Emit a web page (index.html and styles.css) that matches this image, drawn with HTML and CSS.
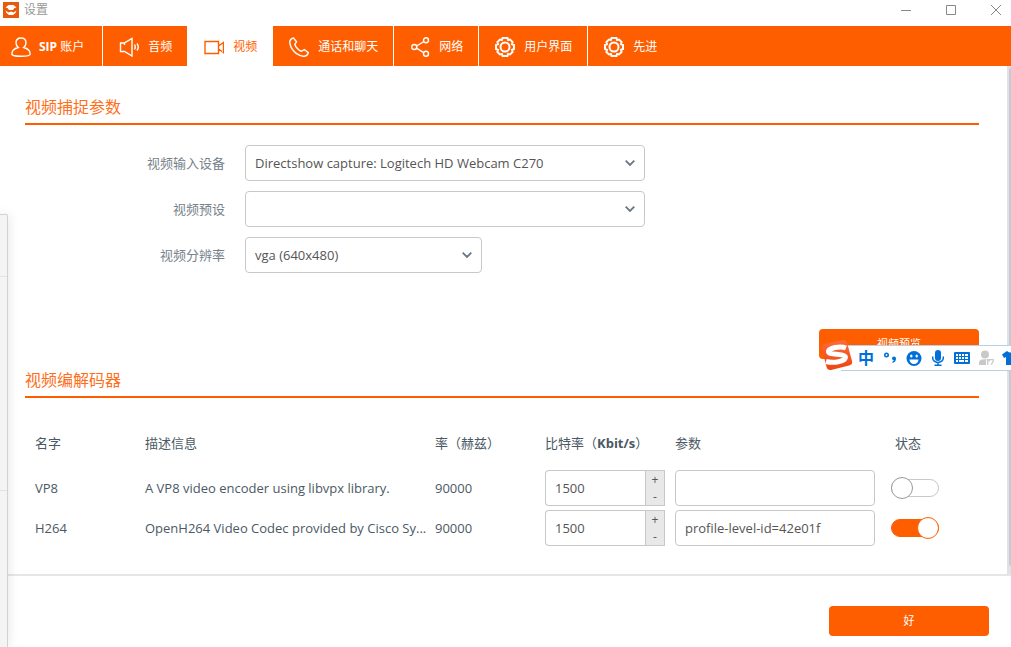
FILE: index.html
```html
<!DOCTYPE html>
<html lang="zh-CN">
<head>
<meta charset="utf-8">
<meta name="viewport" content="width=device-width, initial-scale=1">
<title>设置</title>
<link rel="stylesheet" href="styles.css">
</head>
<body>
<div class="window">
  <header class="titlebar">
    <svg class="app-icon" viewBox="0 0 16 16" aria-hidden="true">
      <rect width="16" height="16" fill="#e8590c"/>
      <path d="M5.500 3H10.500L13.500 5.500L11.500 6L10 8H6L4.500 6L2.500 5.500Z" fill="#fff"/>
      <path d="M2.500 8.500L5.500 10.500L8 9.500L10.500 10.500L13.500 8.500L12.500 11L10 13H6L3.500 11Z" fill="#fff"/>
    </svg>
    <span class="title">设置</span>
    <div class="window-controls">
      <button class="window-button" type="button" aria-label="最小化"><svg viewBox="0 0 10 10"><path d="M0 5.500H10"/></svg></button>
      <button class="window-button" type="button" aria-label="最大化"><svg viewBox="0 0 10 10"><path d="M.5 .5H9.500V9.500H.5Z"/></svg></button>
      <button class="window-button" type="button" aria-label="关闭"><svg viewBox="0 0 10 10"><path d="M0 0L10 10M10 0L0 10"/></svg></button>
    </div>
  </header>

  <nav class="tabs">
    <button class="tab tab-first" type="button">
      <svg class="icon" viewBox="0 0 20 20"><path d="M7.300 10.500C5.500 9 5 7.500 5 5.800C5 3 7 1 10 1S15 3 15 5.800C15 7.500 14.500 9 12.700 10.500C16 11.300 19.200 13.500 19.200 17C19.200 18.600 15 19.200 10 19.200S.8 18.600 .8 17C.8 13.500 4 11.300 7.300 10.500Z"/></svg>
      <span><b>SIP</b> 账户</span>
    </button>
    <button class="tab" type="button">
      <svg class="icon" viewBox="0 0 20 20"><path d="M5.500 6H1.500V14.500H5.500L13 19V1.500L5.500 6V8M15.500 7.500Q17 10 15.500 12.500M18 6.500Q20.500 10 18 13.500"/></svg>
      <span>音频</span>
    </button>
    <button class="tab tab-active" type="button" aria-current="page">
      <svg class="icon" viewBox="0 0 20 20"><path d="M1 4.500H14.500V16.500H1ZM14.500 9L19.500 5.500V15.500L14.500 12"/></svg>
      <span>视频</span>
    </button>
    <button class="tab" type="button">
      <svg class="icon" viewBox="0 0 20 20"><path d="M4.500 1L7.500 4.800L5.800 7.300C6.500 10 9.800 13.500 12.500 14.300L15.300 12.500L19.300 15.700C18.500 18.500 16.500 19.500 14 19.200C7.500 18.500 1.300 12 .8 5.800C.7 3.200 2 1.500 4.500 1Z"/></svg>
      <span>通话和聊天</span>
    </button>
    <button class="tab" type="button">
      <svg class="icon" viewBox="0 0 20 20"><path d="M6.500 9L14 4.500M6.500 11.200L14 15.800"/><circle cx="4.300" cy="10" r="2.500"/><circle cx="16" cy="3.300" r="2.500"/><circle cx="16" cy="16.800" r="2.500"/></svg>
      <span>网络</span>
    </button>
    <button class="tab" type="button">
      <svg class="icon icon-gear" viewBox="0 0 20 20"><path d="M7.600 1H12.400L13.100 3L15 2.600L17.600 5L17 7.100L19 8V12L17 12.900L17.600 15L15 17.400L13.100 17L12.400 19H7.600L6.900 17L5 17.400L2.400 15L3 12.900L1 12V8L3 7.100L2.400 5L5 2.600L6.900 3Z"/><circle cx="10" cy="10" r="4.500"/></svg>
      <span>用户界面</span>
    </button>
    <button class="tab" type="button">
      <svg class="icon icon-gear" viewBox="0 0 20 20"><path d="M7.600 1H12.400L13.100 3L15 2.600L17.600 5L17 7.100L19 8V12L17 12.900L17.600 15L15 17.400L13.100 17L12.400 19H7.600L6.900 17L5 17.400L2.400 15L3 12.900L1 12V8L3 7.100L2.400 5L5 2.600L6.900 3Z"/><circle cx="10" cy="10" r="4.500"/></svg>
      <span>先进</span>
    </button>
  </nav>

  <div class="body">
    <main class="content">
      <section>
        <h2 class="heading">视频捕捉参数</h2>
        <div class="form">
          <label class="label" for="device">视频输入设备</label>
          <select class="field select" id="device"><option>Directshow capture: Logitech HD Webcam C270</option></select>
          <label class="label" for="preset">视频预设</label>
          <select class="field select" id="preset"><option></option></select>
          <label class="label" for="size">视频分辨率</label>
          <select class="field select select-short" id="size"><option>vga (640x480)</option></select>
        </div>
        <div class="preview"><button class="button" type="button">视频预览</button></div>
      </section>

      <section>
        <h2 class="heading">视频编解码器</h2>
        <table class="codecs">
          <colgroup><col class="col-name"><col class="col-desc"><col class="col-rate"><col class="col-bitrate"><col class="col-params"><col></colgroup>
          <thead>
            <tr><th>名字</th><th>描述信息</th><th>率（赫兹）</th><th id="bitrate">比特率（<b>Kbit/s</b>）</th><th id="params">参数</th><th id="status">状态</th></tr>
          </thead>
          <tbody>
            <tr>
              <td id="vp8">VP8</td>
              <td>A VP8 video encoder using libvpx library.</td>
              <td>90000</td>
              <td><div class="spinner"><input class="field spinner-input" type="text" value="1500" aria-labelledby="vp8 bitrate"><div class="steps"><button class="step" type="button">+</button><button class="step" type="button">-</button></div></div></td>
              <td><input class="field params" type="text" aria-labelledby="vp8 params"></td>
              <td><input class="switch" type="checkbox" role="switch" aria-labelledby="vp8 status"></td>
            </tr>
            <tr>
              <td id="h264">H264</td>
              <td>OpenH264 Video Codec provided by Cisco Sy...</td>
              <td>90000</td>
              <td><div class="spinner"><input class="field spinner-input" type="text" value="1500" aria-labelledby="h264 bitrate"><div class="steps"><button class="step" type="button">+</button><button class="step" type="button">-</button></div></div></td>
              <td><input class="field params" type="text" value="profile-level-id=42e01f" aria-labelledby="h264 params"></td>
              <td><input class="switch" type="checkbox" role="switch" checked aria-labelledby="h264 status"></td>
            </tr>
          </tbody>
        </table>
      </section>
    </main>
    <div class="scrollbar"><div class="thumb"></div></div>
  </div>

  <footer class="footer"><button class="button" type="button">好</button></footer>

  <div class="side-panel"><div class="side-cell side-top"></div><div class="side-cell side-middle"></div></div>

  <div class="ime">
    <svg class="ime-logo" viewBox="0 0 34 32" aria-hidden="true">
      <defs><linearGradient id="logo-fill" x1="0" y1="0" x2="0" y2="1"><stop offset="0" stop-color="#ff6a3c"/><stop offset="1" stop-color="#ec4510"/></linearGradient></defs>
      <path d="M5 5L23 1Q26 .5 27 3.500L32 22Q33 25.500 29 26.500L11 31Q7.500 31.500 6.500 28L2 10Q1 6 5 5Z" fill="url(#logo-fill)"/>
      <path d="M26 9C20 6.500 8 9 8.500 13C9 16.500 25 14 25.500 18.300C25.800 22.500 13 24.500 6 22.500" fill="none" stroke="#fff" stroke-width="5"/>
    </svg>
    <span class="ime-item ime-mode">中</span>
    <svg class="ime-item" viewBox="0 0 16 16"><circle cx="4.500" cy="5" r="1.700" fill="none" stroke="#0070d8" stroke-width="1.600"/><path d="M10 8.500a2 2 0 1 1 4 0q0 3.500-3.500 4.500v-1.500q1.300-.5 1.300-1.300q-1.800 0-1.800-1.700z"/></svg>
    <svg class="ime-item" viewBox="0 0 16 16"><circle cx="8" cy="8.500" r="7.500"/><path d="M3.500 9.500h9a4.500 4.500 0 0 1-9 0z" fill="#fff"/><ellipse cx="5.300" cy="6" rx="1.200" ry="1.600" fill="#fff"/><ellipse cx="10.700" cy="6" rx="1.200" ry="1.600" fill="#fff"/></svg>
    <svg class="ime-item" viewBox="0 0 16 16"><rect x="5" y="0" width="6" height="11" rx="3"/><path d="M2.700 6.500v1.500a5.300 4.500 0 0 0 10.600 0V6.500M8 12.500V15.500M4.500 15.300h7" fill="none" stroke="#0070d8" stroke-width="1.500"/></svg>
    <svg class="ime-item" viewBox="0 0 16 16"><path d="M1 2H15Q16 2 16 3V13Q16 14 15 14H1Q0 14 0 13V3Q0 2 1 2Z"/><path d="M2 4h2v2H2zM5 4h2v2H5zM8 4h2v2H8zM11 4h3v2h-3zM2 7h2v2H2zM5 7h2v2H5zM8 7h2v2H8zM11 7h3v2h-3zM2 10h2v2H2zM5 10h5v2H5zM11 10h3v2h-3z" fill="#fff"/></svg>
    <svg class="ime-item" viewBox="0 0 16 16"><g fill="#c9c9c9"><circle cx="7" cy="4.500" r="4"/><path d="M1 15v-2.500q0-2.500 3-3l6-.5v6z"/></g><path d="M8 8h8v4l-3 4H8z" fill="#fff"/><path d="M8.500 9.700h1.200v5M11.200 11.500V9.600h4v1.800l-2 3.300" fill="none" stroke="#c9c9c9" stroke-width="1.300"/></svg>
    <svg class="ime-item" viewBox="0 0 16 16"><path d="M5 1L0 4.500L2 8L4 7V15H13V7L15 8L16 4.500L12 1Q8.500 4 5 1Z"/></svg>
  </div>
</div>
</body>
</html>
```
FILE: styles.css
```css
* {
  box-sizing: border-box;
}

body {
  margin: 0;
  background: #fff;
  color: #4b5964;
  font: 13px/20px "Open Sans", "Noto Sans CJK SC", sans-serif;
}

button,
input,
select {
  margin: 0;
  font: inherit;
  color: inherit;
}

.window {
  position: relative;
  display: flex;
  flex-direction: column;
  min-height: 100vh;
  overflow: hidden;
}

/* Title bar */
.titlebar {
  display: flex;
  align-items: center;
  height: 26px;
  padding: 0 10px 6px 3px;
}

.app-icon {
  width: 16px;
  height: 16px;
}

.title {
  margin-left: 5px;
  color: #999;
  font-size: 12px;
}

.window-controls {
  display: flex;
  gap: 35px;
  margin-left: auto;
}

.window-button {
  display: flex;
  padding: 0;
  border: 0;
  background: none;
}

.window-button svg {
  width: 10px;
  height: 10px;
  overflow: visible;
  fill: none;
  stroke: #888;
}

/* Tabs */
.tabs {
  display: flex;
  gap: 1px;
  height: 40px;
}

.tab {
  display: flex;
  align-items: center;
  gap: 9px;
  padding: 1px 15px 0 16px;
  border: 0;
  background: #ff5e00;
  color: #fff;
  font-size: 12px;
  white-space: nowrap;
}

.tab-first {
  gap: 8px;
  padding: 1px 18px 0 11px;
}

.tab:last-child {
  flex: 1;
}

.tab-active {
  background: #fff;
  color: #ff5e00;
}

.icon {
  width: 20px;
  height: 20px;
  fill: none;
  stroke: currentColor;
  stroke-width: 1.4;
}

.icon-gear {
  stroke-width: 2;
}

/* Page */
.body {
  display: flex;
  flex: 1;
  border-bottom: 2px solid #e6e6e6;
}

.content {
  flex: 1;
  min-width: 0;
  padding: 29px 28px 26px 25px;
}

.scrollbar {
  width: 4px;
  padding: 2px 0 8px 2px;
  background: #dfe2e6;
}

.thumb {
  height: 100%;
  border-radius: 2px 0 0 2px;
  background: #c5cad3;
}

.heading {
  margin: 0 0 20px;
  padding-bottom: 4px;
  border-bottom: 2px solid #ff5e00;
  color: #ff6f1a;
  font-size: 16px;
  font-weight: 400;
  line-height: 24px;
}

.form {
  display: grid;
  grid-template-columns: 200px minmax(0, 400px);
  gap: 10px 20px;
  align-items: center;
}

.label {
  color: #76818a;
  text-align: right;
}

.field {
  width: 100%;
  height: 36px;
  padding: 0 9px;
  border: 1px solid #c8c8c8;
  border-radius: 4px;
  background: #fff;
  color: #555;
}

.select {
  appearance: none;
  background: #fff url("data:image/svg+xml,%3Csvg xmlns='http://www.w3.org/2000/svg' width='10' height='6'%3E%3Cpath d='M.7 .7L5 5L9.300 .7' fill='none' stroke='%23697785' stroke-width='1.800'/%3E%3C/svg%3E") no-repeat right 9px center;
}

.select-short {
  width: 237px;
}

.button {
  width: 160px;
  height: 30px;
  padding: 0;
  border: 0;
  border-radius: 4px;
  background: #ff5e00;
  color: #fff;
  font-size: 11px;
}

.preview {
  display: flex;
  justify-content: flex-end;
  padding: 56px 0 9px;
}

/* Codec table */
.codecs {
  width: 100%;
  table-layout: fixed;
  border-collapse: collapse;
}

.col-name,
.col-rate {
  width: 110px;
}

.col-desc {
  width: 290px;
}

.col-bitrate {
  width: 130px;
}

.col-params {
  width: 210px;
}

.codecs th {
  height: 50px;
  padding: 0 0 0 10px;
  font-weight: 400;
  text-align: left;
  white-space: nowrap;
}

.codecs td {
  height: 40px;
  padding: 0 0 0 10px;
  white-space: nowrap;
}

.codecs th:last-child {
  padding-left: 20px;
}

.codecs td:last-child {
  padding-left: 16px;
}

.codecs .field {
  display: block;
}

.spinner {
  display: flex;
}

.spinner-input {
  flex: 1;
  min-width: 0;
  border-right: 0;
  border-radius: 4px 0 0 4px;
}

.steps {
  display: flex;
  flex-direction: column;
  width: 20px;
  border: 1px solid #c8c8c8;
  background: #e8e8e8;
}

.step {
  flex: 1;
  padding: 0;
  border: 0;
  background: none;
  font-size: 12px;
  line-height: 16px;
}

.switch {
  display: flex;
  align-items: center;
  appearance: none;
  width: 48px;
  height: 18px;
  border: 1px solid #c8c8c8;
  border-radius: 9px;
}

.switch::before {
  content: "";
  box-sizing: border-box;
  flex: none;
  width: 22px;
  height: 22px;
  margin: 0 -1px;
  border: 1px solid #999;
  border-radius: 50%;
  background: #fff;
}

.switch:checked {
  justify-content: flex-end;
  border-color: #ff5e00;
  background: #ff5e00;
}

.switch:checked::before {
  border-color: #ff5e00;
}

.footer {
  display: flex;
  justify-content: flex-end;
  padding: 30px 22px 11px;
}

/* Edge of the neighbouring panel */
.side-panel {
  position: absolute;
  top: 214px;
  bottom: 0;
  left: 0;
  width: 8px;
  border: solid #d2d2d2;
  border-width: 1px 1px 0 0;
  border-radius: 0 2px 0 0;
  background: #f4f4f4;
  box-shadow: 0 0 12px rgba(0, 0, 0, 0.12);
}

.side-cell {
  border-bottom: 1px solid #e2e2e2;
}

.side-top {
  height: 62px;
}

.side-middle {
  height: 214px;
}

/* Floating input-method bar */
.ime {
  position: absolute;
  top: 345px;
  right: 0;
  display: flex;
  align-items: center;
  gap: 8px;
  width: 170px;
  height: 26px;
  padding-left: 17px;
  border: 1px solid #b9cfe4;
  border-width: 1px 0;
  background: #fff;
}

.ime-logo {
  position: absolute;
  bottom: -1px;
  left: -21px;
  width: 34px;
  height: 32px;
}

.ime-item {
  flex: none;
  width: 16px;
  height: 16px;
  fill: #0070d8;
}

.ime-mode {
  color: #0070d8;
  font-size: 16px;
  font-weight: 700;
  line-height: 16px;
}
```
